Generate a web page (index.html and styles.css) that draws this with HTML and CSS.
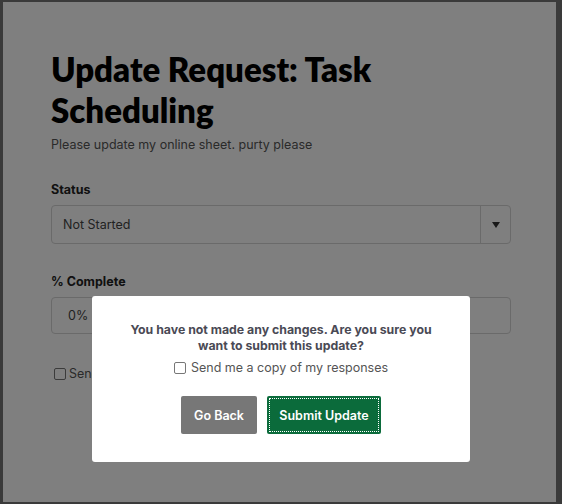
FILE: index.html
```html
<!DOCTYPE html>
<html lang="en">
<head>
    <meta charset="UTF-8">
    <title>Update Request: Task Scheduling</title>
    <link rel="stylesheet" href="styles.css">
</head>
<body>
    <div class="frame">
        <div class="page">
            <h1 class="title">Update Request: Task Scheduling</h1>
            <p class="subtitle">Please update my online sheet. purty please</p>

            <div class="field">
                <label class="label">Status</label>
                <div class="select">
                    <span class="select-value">Not Started</span>
                    <span class="select-arrow">
                        <svg width="8" height="6" viewBox="0 0 8 6"><path d="M0 0h8L4 6z" fill="#333"/></svg>
                    </span>
                </div>
            </div>

            <div class="field">
                <label class="label">% Complete</label>
                <div class="input">0%</div>
            </div>

            <label class="copy-check page-check"><span class="box"></span>Send me a copy of my responses</label>
        </div>

        <div class="overlay"></div>

        <div class="modal">
            <p class="modal-text">You have not made any changes. Are you sure you want to submit this update?</p>
            <label class="copy-check"><span class="box"></span>Send me a copy of my responses</label>
            <div class="modal-actions">
                <button class="btn btn-back">Go Back</button>
                <button class="btn btn-submit">Submit Update</button>
            </div>
        </div>
    </div>
</body>
</html>
```

FILE: styles.css
```css
*{
    margin: 0;
    padding: 0;
    box-sizing: border-box;
}

body {
    background-color: #3a3a3a;
    font-family: 'Inter', sans-serif;
}

.frame{
    position: relative;
    margin: 2px 6px 2px 3px;
    height: 500px;
    background-color: #fff;
    overflow: hidden;
}

.page{
    padding: 47px 45px 0 48px;
}

.title{
    font-family: 'Lato', sans-serif;
    font-size: 33px;
    font-weight: 800;
    line-height: 41px;
    color: #000;
    max-width: 340px;
}

.subtitle{
    font-size: 12.5px;
    color: #555;
    margin-top: 6px;
}

.field{
    margin-top: 30px;
}

.field + .field{
    margin-top: 30px;
}

.label{
    display: block;
    font-size: 12.5px;
    font-weight: 700;
    color: #222;
    margin-bottom: 8px;
}

.select{
    display: flex;
    height: 39px;
    border: 1px solid #d4d4d4;
    border-radius: 4px;
}

.select-value{
    flex: 1;
    display: flex;
    align-items: center;
    padding-left: 11px;
    font-size: 12.5px;
    color: #444;
}

.select-arrow{
    width: 30px;
    display: flex;
    align-items: center;
    justify-content: center;
    border-left: 1px solid #d4d4d4;
}

.input{
    height: 37px;
    border: 1px solid #d4d4d4;
    border-radius: 4px;
    display: flex;
    align-items: center;
    padding-left: 16px;
    font-size: 12.5px;
    color: #444;
}

.copy-check{
    display: flex;
    align-items: center;
    gap: 3px;
    font-size: 12.5px;
    color: #555;
}

.page-check{
    margin-top: 32px;
    margin-left: 3px;
}

.box{
    width: 12px;
    height: 12px;
    border: 1px solid #777;
    border-radius: 2px;
    background-color: #fff;
}

.overlay{
    position: absolute;
    inset: 0;
    background-color: rgba(0, 0, 0, 0.5);
}

.modal{
    position: absolute;
    top: 294px;
    left: 89px;
    width: 378px;
    height: 166px;
    background-color: #fff;
    border-radius: 3px;
    padding: 26px 30px 0;
    display: flex;
    flex-direction: column;
    align-items: center;
}

.modal-text{
    font-size: 12.3px;
    font-weight: 700;
    color: #4a4a55;
    text-align: center;
    line-height: 16px;
    max-width: 310px;
}

.modal .copy-check{
    margin-top: 6px;
    color: #555;
}

.modal .copy-check .box{
    margin-right: 2px;
}

.modal-actions{
    display: flex;
    gap: 10px;
    margin-top: 21px;
}

.btn{
    height: 38px;
    border: none;
    border-radius: 2px;
    color: #fff;
    font-family: 'Inter', sans-serif;
    font-size: 12.5px;
    font-weight: 600;
    white-space: nowrap;
}

.btn-back{
    background-color: #777;
    width: 76px;
}

.btn-submit{
    background-color: #0b6b3b;
    width: 114px;
    outline: 1px dotted #fff;
    outline-offset: -3px;
}
```
